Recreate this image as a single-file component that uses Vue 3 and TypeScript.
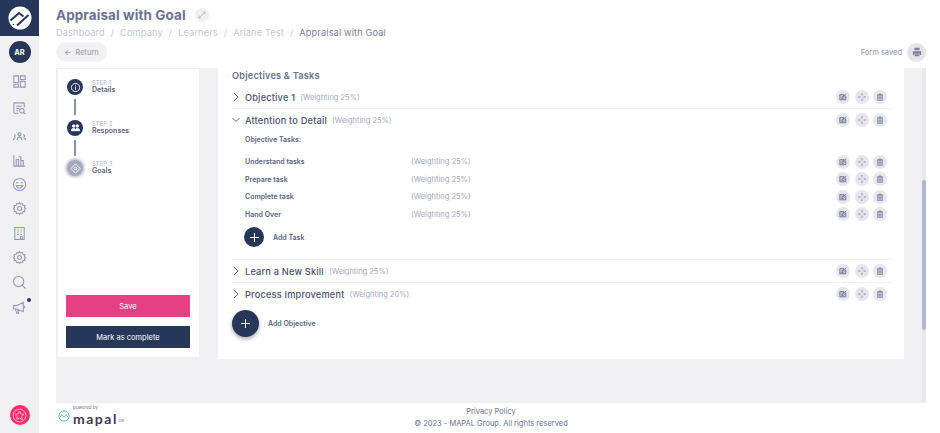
<template>
  <div class="app">
    <aside class="sidebar">
      <div class="logo">
        <svg width="24" height="24" viewBox="0 0 24 24">
          <circle cx="12" cy="12" r="11.5" fill="#fff" />
          <path d="M2.5 14.5 L11 7 L15.5 10.5 M9 19.5 L20.5 9" stroke="#27375a" stroke-width="2" fill="none" />
          <circle cx="5.5" cy="18.5" r="0.7" fill="#27375a" />
        </svg>
      </div>
      <div class="avatar">AR</div>
      <nav class="nav">
        <span
          v-for="item in navItems"
          :key="item.id"
          class="nav-item"
          :style="{ marginTop: item.gap + 'px' }"
        >
          <svg width="15" height="15" viewBox="0 0 16 16" fill="none" stroke="#9096b4" stroke-width="1.1">
            <path :d="item.d" />
          </svg>
          <i v-if="item.id === 'news'" class="nav-dot"></i>
        </span>
      </nav>
      <div class="help">
        <svg width="15" height="15" viewBox="0 0 16 16" fill="none" stroke="#ffb3c8" stroke-width="1">
          <circle cx="8" cy="8" r="6.8" />
          <path d="M8 3.2 L9.4 6.4 L12.8 6.7 L10.2 9 L11 12.4 L8 10.6 L5 12.4 L5.8 9 L3.2 6.7 L6.6 6.4 Z" />
        </svg>
      </div>
    </aside>

    <div class="main">
      <header class="header">
        <div class="title-row">
          <h1 class="title">Appraisal with Goal</h1>
          <span class="expand">
            <svg width="8" height="8" viewBox="0 0 8 8" fill="none" stroke="#b4b8c9" stroke-width="0.8">
              <path d="M1 7 L7 1 M4.5 1 H7 V3.5 M1 4.5 V7 H3.5" />
            </svg>
          </span>
        </div>
        <div class="crumbs">
          <template v-for="(c, i) in crumbs" :key="c">
            <span v-if="i > 0" class="sep">/</span>
            <span :class="{ current: i === crumbs.length - 1 }">{{ c }}</span>
          </template>
        </div>
        <div class="action-row">
          <button class="return"><span class="arrow">&#8592;</span> Return</button>
          <div class="saved">
            <span>Form saved</span>
            <span class="print">
              <svg width="10" height="10" viewBox="0 0 12 12" fill="#7a809b">
                <path d="M3 1 H9 V4 H3 Z M1 5 H11 V9.5 H9.5 V8 H2.5 V9.5 H1 Z M3.2 8.8 H8.8 V11 H3.2 Z" />
              </svg>
            </span>
          </div>
        </div>
      </header>

      <section class="content">
        <div class="steps-card">
          <ol class="steps">
            <li v-for="(s, i) in steps" :key="s.label" class="step">
              <div class="step-rail">
                <span class="step-dot" :class="{ pending: i === 2 }">
                  <svg width="11" height="11" viewBox="0 0 12 12" :fill="s.fill" stroke="#fff" stroke-width="1">
                    <path :d="s.d" />
                  </svg>
                </span>
                <span v-if="i < 2" class="step-line"></span>
              </div>
              <div class="step-text">
                <small>STEP {{ i + 1 }}</small>
                <b>{{ s.label }}</b>
              </div>
            </li>
          </ol>
          <div class="card-buttons">
            <button class="btn pink">Save</button>
            <button class="btn navy">Mark as complete</button>
          </div>
        </div>

        <div class="objectives-card">
          <h2 class="objectives-title">Objectives &amp; Tasks</h2>
          <div v-for="o in objectives" :key="o.name" class="objective">
            <div class="objective-row">
              <svg class="chev" width="8" height="10" viewBox="0 0 8 10" fill="none" stroke="#4a5170" stroke-width="0.9">
                <path :d="o.open ? 'M0.5 3 L4 6.5 L7.5 3' : 'M2 1 L6 5 L2 9'" />
              </svg>
              <span class="objective-name">{{ o.name }}</span>
              <span class="weight">(Weighting {{ o.weight }}%)</span>
              <span class="row-actions">
                <span v-for="a in actions" :key="a.id" class="act">
                  <svg width="8" height="8" viewBox="0 0 10 10" :fill="a.fill" :stroke="a.stroke" stroke-width="0.9">
                    <path :d="a.d" />
                  </svg>
                </span>
              </span>
            </div>
            <div v-if="o.open" class="tasks">
              <div class="tasks-label">Objective Tasks:</div>
              <div v-for="t in tasks" :key="t" class="task-row">
                <span class="task-name">{{ t }}</span>
                <span class="weight task-weight">(Weighting 25%)</span>
                <span class="row-actions">
                  <span v-for="a in actions" :key="a.id" class="act">
                    <svg width="8" height="8" viewBox="0 0 10 10" :fill="a.fill" :stroke="a.stroke" stroke-width="0.9">
                      <path :d="a.d" />
                    </svg>
                  </span>
                </span>
              </div>
              <div class="add-task">
                <span class="plus small-plus">
                  <svg width="9" height="9" viewBox="0 0 9 9" stroke="#fff" stroke-width="1"><path d="M4.5 0 V9 M0 4.5 H9" /></svg>
                </span>
                <span>Add Task</span>
              </div>
            </div>
          </div>
          <div class="add-objective">
            <span class="plus big-plus">
              <svg width="9" height="9" viewBox="0 0 9 9" stroke="#fff" stroke-width="1"><path d="M4.5 0 V9 M0 4.5 H9" /></svg>
            </span>
            <span>Add Objective</span>
          </div>
        </div>

        <div class="scroll-track"><div class="scroll-thumb"></div></div>
      </section>

      <footer class="footer">
        <div class="brand">
          <svg width="12" height="12" viewBox="0 0 12 12" fill="none" stroke="#4fb9c9" stroke-width="1">
            <circle cx="6" cy="6" r="5.2" />
            <path d="M2 6.5 L4 4.8 L6 6.8 L8 4.8 L10 6.5" />
          </svg>
          <div class="brand-text">
            <small>powered by</small>
            <b>mapal<sup>OS</sup></b>
          </div>
        </div>
        <div class="legal">
          <div>Privacy Policy</div>
          <div>© 2023 - MAPAL Group. All rights reserved</div>
        </div>
      </footer>
    </div>
  </div>
</template>

<script setup lang="ts">
const gear = 'M8 1.5 L9 3.2 L11 2.7 L11.7 4.6 L13.8 5 L13.3 7 L14.6 8 L13.3 9.2 L13.8 11 L11.7 11.5 L11 13.4 L9 12.9 L8 14.5 L7 12.9 L5 13.4 L4.3 11.5 L2.2 11 L2.7 9.2 L1.4 8 L2.7 7 L2.2 5 L4.3 4.6 L5 2.7 L7 3.2 Z M8 5.8 A2.2 2.2 0 1 0 8.1 10.2 A2.2 2.2 0 1 0 8 5.8'

// gap = extra space above each icon, the rail is not evenly spaced
const navItems = [
  { id: 'dash', gap: 0, d: 'M2 2 H7 V9 H2 Z M9 2 H14 V6 H9 Z M9 8 H14 V14 H9 Z M2 11 H7 V14 H2 Z' },
  { id: 'search-doc', gap: 3, d: 'M13 7 V3 Q13 2 12 2 H3 Q2 2 2 3 V12 Q2 13 3 13 H7 M4.5 5.5 H10.5 M4.5 8 H8 M4.5 10.5 H6.5 M10.5 8 A2.4 2.4 0 1 0 10.6 12.8 A2.4 2.4 0 1 0 10.5 8 M12.4 12.2 L14.5 14' },
  { id: 'people', gap: 4, d: 'M8 4 A1.6 1.6 0 1 0 8.1 7.2 A1.6 1.6 0 1 0 8 4 M4 6 A1.4 1.4 0 1 0 4.1 8.8 M12 6 A1.4 1.4 0 1 1 11.9 8.8 M5.5 12 Q5.5 8.5 8 8.5 Q10.5 8.5 10.5 12 M1.5 12 Q1.5 9.5 3.5 9.5 M14.5 12 Q14.5 9.5 12.5 9.5' },
  { id: 'chart', gap: 0, d: 'M2 2 V14 H14 M4.5 7 H7 V14 M7 4 H9.5 V14 M9.5 8 H12 V14 M4.5 7 V14' },
  { id: 'face', gap: 0, d: 'M8 1.5 A6.5 6.5 0 1 0 8.1 14.5 A6.5 6.5 0 1 0 8 1.5 M4.5 6.5 Q5.5 5 6.5 6.5 M9.5 6.5 Q10.5 5 11.5 6.5 M4.5 9 H11.5 Q10.5 12 8 12 Q5.5 12 4.5 9' },
  { id: 'gear', gap: 0, d: gear },
  { id: 'building', gap: 1, d: 'M3 1.5 H13 V14.5 H3 Z M5.5 4 H7 M9 4 H10.5 M5.5 6.5 H7 M9 6.5 H10.5 M5.5 9 H7 M9 9 H10.5 M9 11.5 V14.5 H11 V11.5 Z' },
  { id: 'gear2', gap: 0, d: gear },
  { id: 'search', gap: 1, d: 'M7 1.5 A5.5 5.5 0 1 0 7.1 12.5 A5.5 5.5 0 1 0 7 1.5 M11 11 L14.5 14.5' },
  { id: 'news', gap: 1, d: 'M1.5 6 H5 L12 2.5 V12.5 L5 9.5 H1.5 Z M3.5 9.5 L5 14 H7 L6 10 M13.5 6 V9' },
]

const crumbs = ['Dashboard', 'Company', 'Learners', 'Ariane Test', 'Appraisal with Goal']

const steps = [
  { label: 'Details', fill: 'none', d: 'M6 1.5 A4.5 4.5 0 1 0 6.1 10.5 A4.5 4.5 0 1 0 6 1.5 M6 5 V8.5 M6 3 V4' },
  { label: 'Responses', fill: '#fff', d: 'M4 3 A1.4 1.4 0 1 0 4.1 5.8 A1.4 1.4 0 1 0 4 3 M8 3 A1.4 1.4 0 1 0 8.1 5.8 A1.4 1.4 0 1 0 8 3 M1.5 9.5 Q1.5 7 4 7 Q5.4 7 6 8 Q6.6 7 8 7 Q10.5 7 10.5 9.5 Z' },
  { label: 'Goals', fill: 'none', d: 'M6 1 L11 6 L6 11 L1 6 Z M6 4.5 A1.5 1.5 0 1 0 6.1 7.5 A1.5 1.5 0 1 0 6 4.5' },
]

const objectives = [
  { name: 'Objective 1', weight: 25, open: false },
  { name: 'Attention to Detail', weight: 25, open: true },
  { name: 'Learn a New Skill', weight: 25, open: false },
  { name: 'Process Improvement', weight: 20, open: false },
]

const tasks = ['Understand tasks', 'Prepare task', 'Complete task', 'Hand Over']

const actions = [
  { id: 'edit', fill: '#c3c6d6', stroke: '#5c6381', d: 'M1 2 H6.5 L4 5 L3.5 7 L5.5 6.5 L8.5 3.5 V8.5 H1 Z M4.5 5.5 L9 1' },
  { id: 'move', fill: 'none', stroke: '#8f94ae', d: 'M5 0.5 V3.5 M5 6.5 V9.5 M0.5 5 H3.5 M6.5 5 H9.5 M4 1.5 L5 0.5 L6 1.5 M4 8.5 L5 9.5 L6 8.5 M1.5 4 L0.5 5 L1.5 6 M8.5 4 L9.5 5 L8.5 6' },
  { id: 'trash', fill: '#c3c6d6', stroke: '#7a809b', d: 'M2 2.5 H8 V9.5 H2 Z M1.5 2 H8.5 M4 1 H6 M4 4.5 V8 M6 4.5 V8' },
]
</script>

<style>
html, body { margin: 0; background: #fff; overflow: hidden; }
</style>

<style scoped>
.app {
  display: flex;
  width: 940px;
  height: 433px;
  overflow: hidden;
  font-family: Inter, "Liberation Sans", sans-serif;
  color: #5c6381;
}

.sidebar {
  width: 39px;
  flex-shrink: 0;
  background: #f1f1f3;
  display: flex;
  flex-direction: column;
  align-items: center;
}
.logo {
  width: 100%;
  height: 36px;
  background: #27375a;
  display: flex;
  align-items: center;
  justify-content: center;
}
.avatar {
  width: 22px;
  height: 22px;
  margin-top: 5px;
  border-radius: 50%;
  background: #27375a;
  color: #fff;
  font-size: 7.5px;
  font-weight: 700;
  display: flex;
  align-items: center;
  justify-content: center;
}
.nav { display: flex; flex-direction: column; margin-top: 6px; }
.nav-item { position: relative; display: flex; align-items: center; justify-content: center; width: 39px; height: 24px; }
.nav-dot {
  position: absolute;
  top: 3px;
  right: 8px;
  width: 4px;
  height: 4px;
  border-radius: 50%;
  background: #27375a;
}
.help {
  margin-top: auto;
  margin-bottom: 8px;
  width: 20px;
  height: 20px;
  border-radius: 50%;
  background: #f5306b;
  display: flex;
  align-items: center;
  justify-content: center;
}

.main { flex: 1; min-width: 0; display: flex; flex-direction: column; background: #fff; }

.header { height: 68px; padding: 0 14px 0 17px; flex-shrink: 0; box-sizing: border-box; }
.title-row { display: flex; align-items: center; height: 26px; padding-top: 4px; box-sizing: border-box; }
.title { margin: 0; font-size: 13.5px; font-weight: 700; color: #6b7291; letter-spacing: 0.09px; white-space: nowrap; }
.expand {
  margin-left: 9px;
  width: 14px;
  height: 14px;
  border-radius: 50%;
  background: #f1f1f3;
  display: flex;
  align-items: center;
  justify-content: center;
}
.crumbs { display: flex; gap: 6px; height: 13px; padding-top: 1px; box-sizing: border-box; line-height: 12px; font-size: 9.2px; color: #c3c6d4; letter-spacing: 0.14px; white-space: nowrap; }
.crumbs .current { color: #7a809b; }
.action-row { display: flex; align-items: center; justify-content: space-between; margin-top: 3px; }
.return {
  width: 51px;
  height: 20px;
  padding: 0;
  border: none;
  border-radius: 10px;
  background: #f1f1f3;
  color: #9095ab;
  font: inherit;
  font-size: 7.5px;
}
.arrow { color: #7a809b; margin-right: 2px; }
.saved { display: flex; align-items: center; gap: 5px; font-size: 7.5px; color: #8a90a8; }
.print {
  width: 19px;
  height: 19px;
  border-radius: 50%;
  background: #e4e4ea;
  display: flex;
  align-items: center;
  justify-content: center;
}

.content {
  flex: 1;
  min-height: 0;
  margin-right: 14px;
  margin-left: 17px;
  padding: 0 0 0 2px;
  background: #f1f1f3;
  display: flex;
  align-items: flex-start;
}
.steps-card {
  width: 141px;
  height: 288px;
  margin-top: 1px;
  background: #fff;
  box-sizing: border-box;
  padding: 10px 9px 9px 8px;
  display: flex;
  flex-direction: column;
  flex-shrink: 0;
}
.steps { list-style: none; margin: 0; padding: 0; flex: 1; }
.step { display: flex; gap: 8px; height: 40.5px; }
.step-rail { width: 18px; display: flex; flex-direction: column; align-items: center; }
.step-dot {
  width: 16px;
  height: 16px;
  border-radius: 50%;
  background: #27375a;
  display: flex;
  align-items: center;
  justify-content: center;
  flex-shrink: 0;
}
.step-dot.pending { background: #a5a9bd; box-shadow: 0 0 2px 2px #cfd1db; }
.step-line { width: 1.5px; height: 16px; margin-top: 4px; background: #8a90ab; }
.step-text { display: flex; flex-direction: column; }
.step-text small { font-size: 5.7px; line-height: 7px; color: #a9adc0; letter-spacing: 0.2px; }
.step-text b { font-size: 7px; line-height: 8px; font-weight: 600; color: #5c6381; }
.card-buttons { display: flex; flex-direction: column; gap: 9px; }
.btn {
  height: 22px;
  border: none;
  padding: 0;
  color: #fff;
  font: inherit;
  font-size: 7.5px;
  font-weight: 400;
}
.pink { background: #e83e84; }
.navy { background: #27375a; }

.objectives-card {
  width: 686px;
  height: 291px;
  margin-left: 19px;
  background: #fff;
  box-sizing: border-box;
  padding: 0 13px 0 14px;
  flex-shrink: 0;
}
.objectives-title { margin: 0; height: 18px; box-sizing: border-box; line-height: 15px; font-size: 9.2px; font-weight: 600; color: #6b7291; letter-spacing: 0.2px; }
.objective { border-bottom: 1px solid #f1f1f3; }
.objective:nth-last-child(2) { border-bottom: none; }
.objective-row { display: flex; align-items: center; height: 22px; }
.chev { margin-right: 5px; flex-shrink: 0; }
.objective-name { font-size: 9.2px; font-weight: 500; color: #4a5170; letter-spacing: 0.2px; white-space: nowrap; }
.weight { margin-left: 5px; font-size: 7.5px; color: #a5a9c0; white-space: nowrap; }
.task-weight { margin-left: 0; }
.row-actions { margin-left: auto; margin-right: 4px; display: flex; gap: 4.5px; }
.act {
  width: 14px;
  height: 14px;
  border-radius: 50%;
  background: #e6e6ec;
  display: flex;
  align-items: center;
  justify-content: center;
}
.tasks { padding-left: 13px; padding-bottom: 12px; }
.tasks-label { height: 20px; line-height: 18px; margin-bottom: 2px; font-size: 7px; font-weight: 600; color: #5c6381; }
.task-row { display: flex; align-items: center; height: 17.5px; }
.task-name { width: 166px; font-size: 7px; font-weight: 600; color: #5c6381; }
.add-task, .add-objective { display: flex; align-items: center; font-size: 7px; font-weight: 600; color: #5c6381; }
.add-task { gap: 9px; margin-top: 4px; margin-left: -1px; }
.add-objective { gap: 9px; margin-top: 5px; }
.plus {
  border-radius: 50%;
  background: #27375a;
  display: flex;
  align-items: center;
  justify-content: center;
}
.small-plus { width: 20px; height: 20px; }
.big-plus { width: 27px; height: 27px; box-shadow: 0 2px 4px rgba(0, 0, 0, 0.35); }

.scroll-track { margin-left: 18px; width: 4px; height: 100%; position: relative; background: #e9e9ec; flex-shrink: 0; }
.scroll-thumb { position: absolute; top: 112px; left: 0; width: 4px; height: 150px; border-radius: 2px; background: #b0b6d2; }

.footer { height: 30px; flex-shrink: 0; position: relative; display: flex; align-items: center; padding-left: 19px; }
.brand { display: flex; align-items: center; gap: 3px; margin-bottom: 4px; }
.brand-text { display: flex; flex-direction: column; }
.brand-text small { font-size: 4.5px; line-height: normal; color: #6b7291; }
.brand-text b { font-family: Lato, sans-serif; font-size: 14px; line-height: normal; font-weight: 700; color: #3f3a5e; letter-spacing: 1.5px; }
.brand-text sup { font-size: 4.5px; font-weight: 500; color: #6b7291; letter-spacing: 0; vertical-align: 2px; line-height: 0; }
.legal {
  position: absolute;
  left: 352px;
  top: 3px;
  width: 200px;
  text-align: center;
  font-size: 7.5px;
  line-height: 12px;
  color: #6b7291;
}
</style>
